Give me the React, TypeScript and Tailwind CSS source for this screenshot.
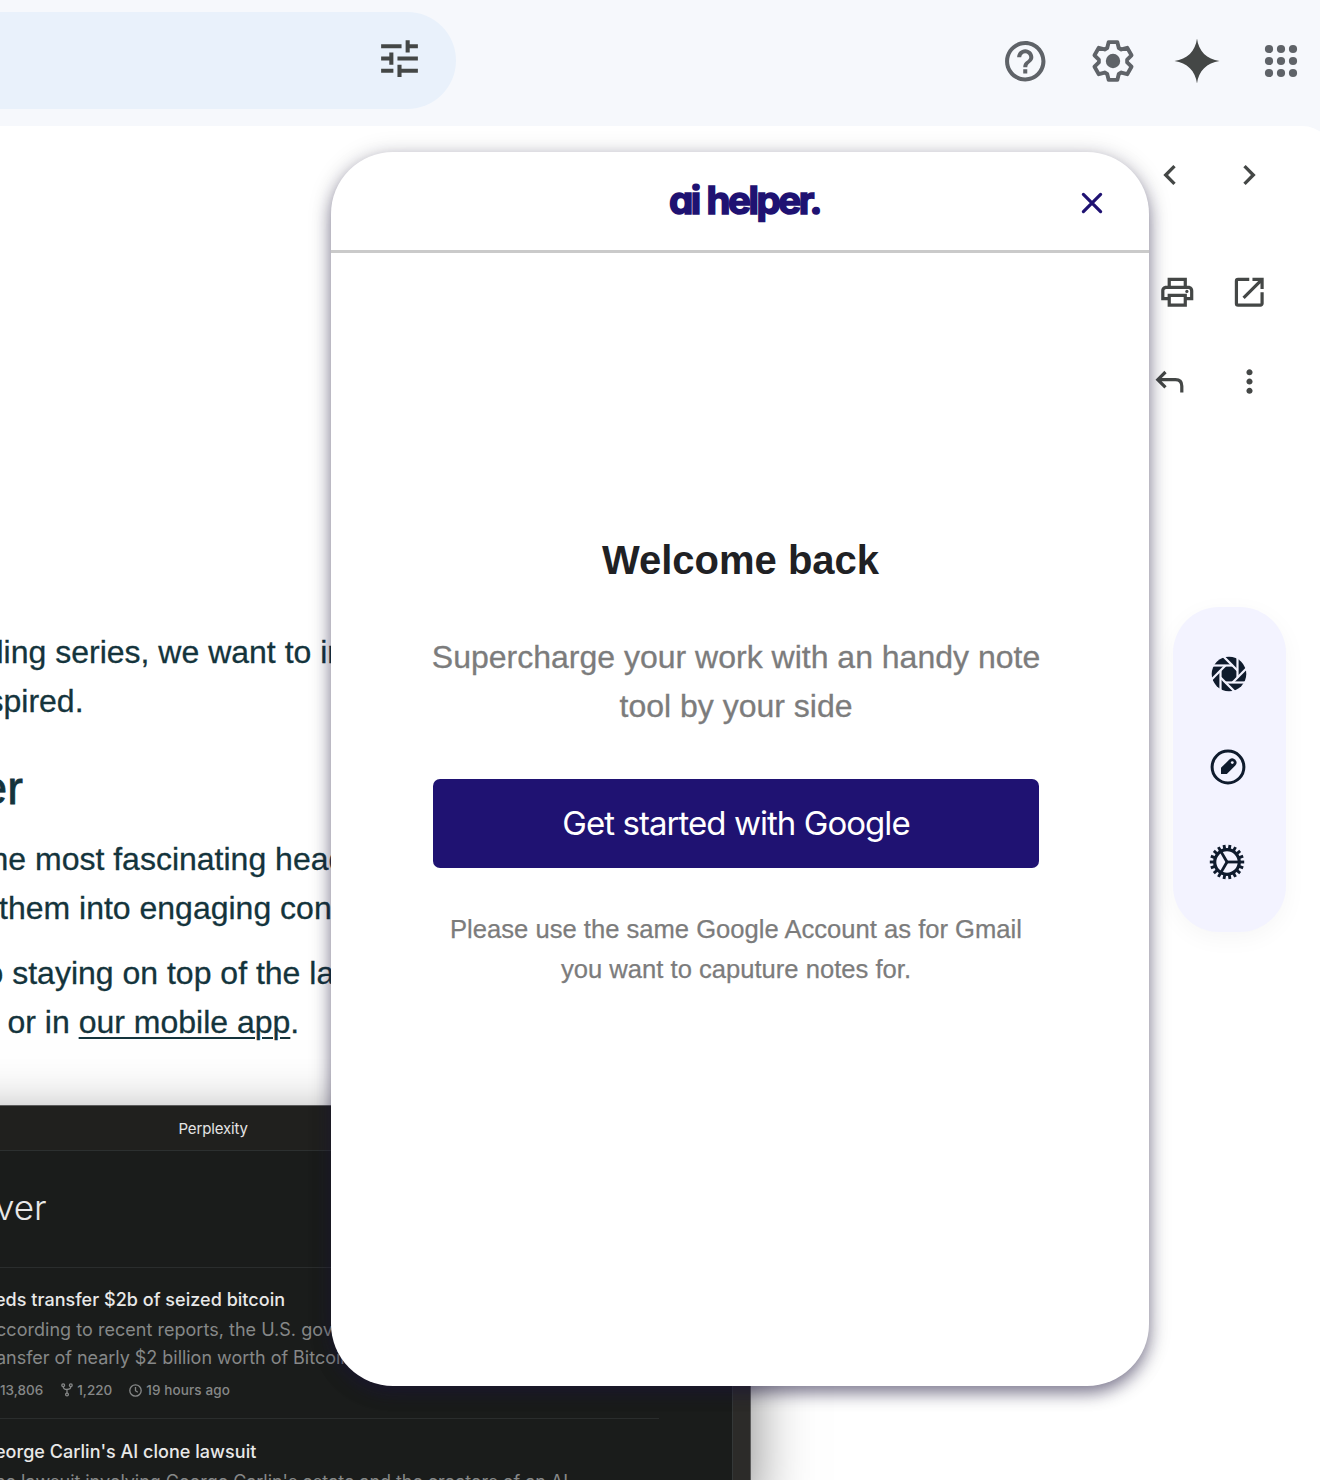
import React from "react";
import { MdTune, MdHelpOutline, MdChevronLeft, MdChevronRight, MdOutlinePrint, MdOpenInNew, MdMoreVert } from "react-icons/md";

function SparkIcon() {
  return (
    <svg width="46" height="46" viewBox="-23 -23 46 46" fill="#444746">
      <path d="M0-22.5C1.5-10 10-1.5 22.5 0C10 1.500 1.500 10 0 22.500C-1.500 10-10 1.500-22.500 0C-10-1.500-1.500-10 0-22.500Z" />
    </svg>
  );
}

function GearIcon() {
  const points = [0, 60, 120, 180, 240, 300].flatMap((deg) => {
    const a = (deg * Math.PI) / 180;
    return [[-5.8, -13], [-4.3, -18.900], [4.3, -18.900], [5.8, -13]].map(
      ([x, y]) => `${x * Math.cos(a) - y * Math.sin(a)},${x * Math.sin(a) + y * Math.cos(a)}`
    );
  });
  return (
    <svg width="50" height="50" viewBox="-25 -25 50 50">
      <polygon points={points.join(" ")} fill="none" stroke="#5f6368" strokeWidth="3.900" strokeLinejoin="round" />
      <circle r="7.200" fill="#5f6368" />
    </svg>
  );
}

function AppsIcon() {
  return (
    <svg width="34" height="34" viewBox="-17 -17 34 34" fill="#5f6368">
      {[-12, 0, 12].flatMap((x) => [-12, 0, 12].map((y) => <circle key={`${x},${y}`} cx={x} cy={y} r="4.1" />))}
    </svg>
  );
}

function ReplyIcon() {
  return (
    <svg width="30" height="24" viewBox="0 0 30 24" fill="none" stroke="#444746" strokeWidth="3.200">
      <path d="M10.500 2L2.800 9.700L10.500 17.400M2.800 9.700H20.500Q26.800 9.700 26.800 16V22.500" />
    </svg>
  );
}

function ApertureIcon() {
  return (
    <svg width="36" height="36" viewBox="-18 -18 36 36">
      <circle r="17.3" fill="#0f1b2d" />
      {[0, 45, 90, 135, 180, 225, 270, 315].map((a) => (
        <path key={a} d="M8.500 3.500V-17.500" transform={`rotate(${a})`} stroke="#f3f3ff" strokeWidth="2.200" />
      ))}
    </svg>
  );
}

function PencilCircleIcon() {
  return (
    <svg width="36" height="36" viewBox="-18 -18 36 36">
      <circle r="15.900" fill="none" stroke="#0f1b2d" strokeWidth="3" />
      <path d="M-7 7V.8L1.400-7.500Q4.500-10.200 7.300-7.300Q10-4.500 7.300-1.500L-1.200 7Z" fill="#0f1b2d" />
      <circle cx="4.300" cy="-4.400" r="1.400" fill="#f3f3ff" />
    </svg>
  );
}

function CogIcon() {
  return (
    <svg width="36" height="36" viewBox="-18 -18 36 36" stroke="#0f1b2d" fill="none">
      <circle r="12.300" strokeWidth="3.200" />
      {Array.from({ length: 18 }, (_, i) => (
        <path key={i} d="M13 0H17.200" transform={`rotate(${i * 20})`} strokeWidth="2.900" />
      ))}
      {[0, 120, 240].map((a) => (
        <path key={a} d="M0 0H12" transform={`rotate(${a})`} strokeWidth="2.800" />
      ))}
    </svg>
  );
}

function TopBar() {
  return (
    <header className="flex h-[126px] shrink-0 justify-between">
      <div className="mt-[12px] flex h-[97px] w-[456px] items-center justify-end rounded-r-full bg-[#e9f1fb] pr-[32px]">
        <MdTune size={49} color="#444746" className="-mt-[4px]" />
      </div>
      <div className="flex h-[122px] items-center pr-[22px]">
        <MdHelpOutline size={48.5} color="#5f6368" />
        <div className="ml-[38.500px]"><GearIcon /></div>
        <div className="ml-[36px]"><SparkIcon /></div>
        <div className="ml-[44px]"><AppsIcon /></div>
      </div>
    </header>
  );
}

function MessageActions() {
  return (
    <div className="ml-auto mr-[14px] flex w-[180px] flex-col text-[#444746]">
      <div className="mt-[28.500px] flex h-[40px] items-center">
        <MdChevronLeft size={40} className="ml-[10px]" />
        <MdChevronRight size={40} className="ml-[39px]" />
      </div>
      <div className="mt-[77.500px] flex h-[40px] items-center">
        <MdOutlinePrint size={38.5} className="ml-[18px]" />
        <MdOpenInNew size={38.5} className="ml-[33.500px]" />
      </div>
      <div className="mt-[50px] flex h-[40px] items-center">
        <div className="ml-[15px]"><ReplyIcon /></div>
        <MdMoreVert size={37} className="-mt-[2px] ml-[46px]" />
      </div>
    </div>
  );
}

function Article() {
  return (
    <div className="whitespace-nowrap text-[32px] leading-[49px] text-[#14343c] [-webkit-text-stroke:0.3px_#14343c]">
      <p className="mt-[226px] -ml-[3.5px]">ling series, we want to in</p>
      <p className="-ml-[12.500px]">spired.</p>
      <h2 className="mt-[32px] -ml-[19px] h-[60px] text-[47px] leading-[60px] [-webkit-text-stroke:0.8px_#14343c]">er</h2>
      <p className="mt-[17px] -ml-[9.5px]">he most fascinating head</p>
      <p className="-ml-px">them into engaging cont</p>
      <p className="mt-[16px] -ml-[14.5px]">o staying on top of the lat</p>
      <p className="ml-[7.500px]">or in <span className="underline decoration-2 underline-offset-[4px]">our mobile app</span>.</p>
    </div>
  );
}

function NewsWindow() {
  return (
    <div className="-ml-[100px] mt-[58px] flex h-[500px] w-[851px] flex-col whitespace-nowrap border-r border-t border-[#5b5b5b] bg-[#1a1c1b] pl-[100px] font-['Inter'] text-[#868888] shadow-[0_18px_56px_rgba(0,0,0,0.5)]">
      <div className="flex h-[45px] shrink-0 items-center border-b border-[#2c3030] bg-[#20201e] pl-[178.500px] pt-[2px] text-[15px] tracking-[-0.15px] text-[#e4e4e4]">Perplexity</div>
      <div className="flex grow">
        <div className="w-[732px] shrink-0 overflow-hidden">
          <div className="h-[117px] border-b border-[#2a2d2d] pt-[33px] text-[35px] font-light leading-[46px] text-[#e8e8e8]"><div className="-ml-[5px]">ver</div></div>
          <div className="-ml-[5px] mt-[19px] text-[18px] font-medium leading-[26px] tracking-[0.03px] text-[#e8e8e8]">eds transfer $2b of seized bitcoin</div>
          <div className="-ml-[4px] mt-[3px] text-[18px] leading-[28px]">
            <p className="tracking-[0.03px]">ccording to recent reports, the U.S. government</p>
            <p className="tracking-[-0.03px]">ansfer of nearly $2 billion worth of Bitcoin</p>
          </div>
          <div className="mt-[8px] flex h-[20px] items-center text-[13.500px] font-medium">
            <span>13,806</span>
            <svg className="ml-[18px] mr-[4px]" width="12" height="14" viewBox="0 0 12 14" fill="none" stroke="currentColor" strokeWidth="1.300">
              <circle cx="2.200" cy="2.200" r="1.400" /><circle cx="9.800" cy="2.200" r="1.400" /><circle cx="6" cy="11.500" r="1.400" />
              <path d="M2.200 3.600Q2.200 6.500 6 6.500Q9.800 6.500 9.800 3.600M6 6.500V10" />
            </svg>
            <span>1,220</span>
            <svg className="ml-[17px] mr-[4px]" width="13" height="13" viewBox="0 0 13 13" fill="none" stroke="currentColor" strokeWidth="1.300">
              <circle cx="6.500" cy="6.500" r="5.700" /><path d="M6.500 3V6.700L8.800 8.300" />
            </svg>
            <span className="tracking-[0.1px]">19 hours ago</span>
          </div>
          <div className="mt-[18px] w-[659px] border-t border-[#2a2d2d]" />
          <div className="-ml-[5px] mt-[20px] text-[18px] font-medium leading-[26px] tracking-[0.03px] text-[#e8e8e8]">eorge Carlin's AI clone lawsuit</div>
          <p className="-ml-[5px] mt-[3px] text-[18px] leading-[28px] tracking-[-0.05px]">ne lawsuit involving George Carlin's estate and the creators of an AI</p>
        </div>
        <div className="grow border-l border-[#343838] bg-[#2c2b29]" />
      </div>
    </div>
  );
}

function HelperPanel() {
  return (
    <section className="absolute left-[331px] top-[152px] flex h-[1234px] w-[818px] flex-col rounded-[62px] bg-white shadow-[0_7px_16px_rgba(25,18,60,0.5),0_2px_26px_rgba(25,25,40,0.14)]">
      <div className="relative flex h-[101px] shrink-0 justify-center border-b-[3px] border-[#cacaca]">
        <div className="mt-[24px] pl-[9px] text-[38.500px] font-bold leading-[48px] tracking-[-2.450px] [word-spacing:1px] text-[#1f1272] font-['Inter'] [-webkit-text-stroke:1.600px_#1f1272] [stroke-linejoin:round] [font-feature-settings:'cv11']">ai helper.</div>
        <svg className="absolute right-[46px] top-[40px]" width="22" height="22" viewBox="0 0 22 22" fill="none" stroke="#1f1272" strokeWidth="3.200" strokeLinecap="round">
          <path d="M2.400 2.400L19.600 19.600M19.600 2.400L2.400 19.600" />
        </svg>
      </div>
      <div className="flex flex-col items-center pr-[8px] text-center text-[#7c7c7c]">
        <h1 className="mt-[281px] pl-[9px] text-[40px] font-bold leading-[52px] text-[#202124]">Welcome back</h1>
        <p className="mt-[47px] text-[32px] leading-[49px] [-webkit-text-stroke:0.3px_#7c7c7c]">Supercharge your work with an handy note<br />tool by your side</p>
        <button className="mt-[48px] h-[89px] w-[606px] rounded-[7px] bg-[#1f1272] text-[33px] tracking-[-0.950px] text-white font-['Inter']">Get started with Google</button>
        <p className="mt-[41px] text-[25.600px] leading-[40px] [-webkit-text-stroke:0.25px_#7c7c7c]">Please use the same Google Account as for Gmail<br />you want to caputure notes for.</p>
      </div>
    </section>
  );
}

function SideRail() {
  return (
    <nav className="absolute left-[1173px] top-[607px] flex h-[325px] w-[113px] flex-col items-center rounded-[46px] bg-[#f3f3ff] pr-[2px] pt-[49px] shadow-[0_6px_24px_rgba(0,0,0,0.04)]">
      <ApertureIcon />
      <div className="mr-[1px] mt-[57px]"><PencilCircleIcon /></div>
      <div className="mr-[4px] mt-[59px]"><CogIcon /></div>
    </nav>
  );
}

export default function App() {
  return (
    <div className="relative flex h-[1480px] w-[1320px] flex-col overflow-hidden bg-[#f6f8fc] font-['Liberation_Sans',Arial,sans-serif]">
      <TopBar />
      <main className="flex min-h-0 w-[1334px] grow flex-col overflow-hidden rounded-tr-[32px] bg-white">
        <MessageActions />
        <Article />
        <NewsWindow />
      </main>
      <HelperPanel />
      <SideRail />
    </div>
  );
}
